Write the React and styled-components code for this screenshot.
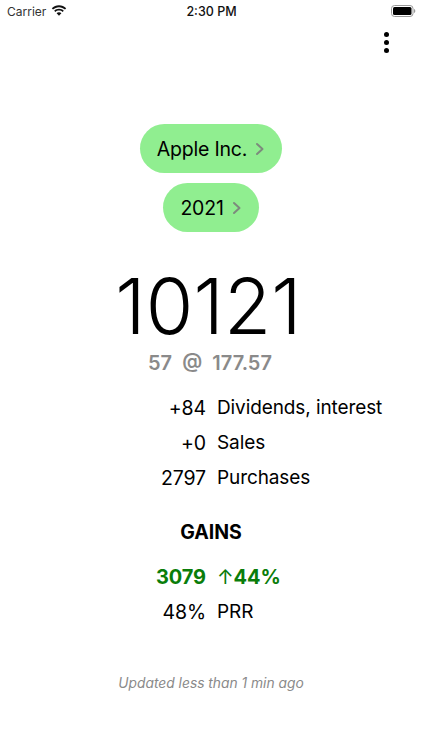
import React from "react";
import styled, { createGlobalStyle } from "styled-components";

const GlobalStyle = createGlobalStyle`
  html, body {
    margin: 0;
    padding: 0;
    background: #fff;
    font-family: Inter, "Liberation Sans", sans-serif;
    color: #000;
  }
`;

const Screen = styled.div`
  width: 422px;
  height: 750px;
  overflow: hidden;
  display: flex;
  flex-direction: column;
  align-items: center;
`;

const StatusBar = styled.div`
  align-self: stretch;
  height: 22px;
  padding: 0 6px 0 7px;
  display: grid;
  grid-template-columns: 1fr auto 1fr;
  align-items: center;
  font-size: 12.5px;
  font-weight: 500;
  color: #111;
`;

const Carrier = styled.div`
  display: flex;
  align-items: center;
  gap: 5px;
  font-size: 12px;
  font-weight: 400;
  color: #333;
`;

const Battery = styled.div`
  justify-self: end;
  display: flex;
  align-items: center;
`;

const MenuRow = styled.div`
  align-self: stretch;
  height: 22px;
  margin-top: 10px;
  padding-right: 33px;
  display: flex;
  justify-content: flex-end;
`;

const Dots = styled.div`
  display: flex;
  flex-direction: column;
  gap: 3px;
  span {
    width: 5px;
    height: 5px;
    border-radius: 50%;
    background: #000;
  }
`;

const Pill = styled.button`
  height: 49px;
  margin-top: ${(p) => p.$top}px;
  padding: 0 17px;
  border: 0;
  border-radius: 25px;
  background: #90ee90;
  color: #000;
  font-family: inherit;
  font-size: 19.5px;
  letter-spacing: -0.2px;
  display: flex;
  align-items: center;
  gap: 8px;
`;

const Total = styled.div`
  margin-top: 34px;
  margin-right: 5px;
  height: 80px;
  line-height: 80px;
  font-size: 77px;
  font-weight: 300;
  letter-spacing: 0.2px;
`;

const Price = styled.div`
  margin-top: 5px;
  margin-right: 2px;
  height: 24px;
  line-height: 24px;
  font-size: 20px;
  font-weight: 600;
  color: #8a8a8a;
  white-space: pre;
`;

const Rows = styled.div`
  margin-top: ${(p) => p.$top}px;
  align-self: stretch;
  display: grid;
  grid-template-columns: 206px 1fr;
  column-gap: 11px;
  grid-auto-rows: 35px;
  align-items: center;
  letter-spacing: -0.1px;
`;

const Amount = styled.div`
  text-align: right;
  font-size: ${(p) => (p.$gain ? 20 : 19.5)}px;
  color: ${(p) => (p.$gain ? "#0a7d0a" : "#000")};
  font-weight: ${(p) => (p.$gain ? 700 : 400)};
`;

const Label = styled.div`
  font-size: ${(p) => (p.$gain ? 20 : 19)}px;
  color: ${(p) => (p.$gain ? "#0a7d0a" : "#000")};
  font-weight: ${(p) => (p.$gain ? 700 : 400)};
`;

const Arrow = styled.span`
  font-weight: 400;
`;

const Heading = styled.div`
  margin-top: 25px;
  height: 24px;
  line-height: 24px;
  font-size: 19.5px;
  font-weight: 700;
`;

const Updated = styled.div`
  margin-top: 46px;
  font-size: 13.8px;
  font-style: italic;
  color: #8a8a8a;
`;

const Chevron = () => (
  <svg width="10" height="14" viewBox="0 0 10 14" fill="none">
    <path d="M2 2l5.500 5L2 12" stroke="#7d8a7d" strokeWidth="2" strokeLinecap="round" strokeLinejoin="round" />
  </svg>
);

const Wifi = () => (
  <svg width="16" height="12" viewBox="0 0 16 12" fill="#111">
    <path d="M8 2.200c2.300 0 4.400.9 6 2.400l1.200-1.300C13.300 1.400 10.800.3 8 .3S2.700 1.400.8 3.300L2 4.600c1.600-1.500 3.700-2.400 6-2.400z" />
    <path d="M8 5.600c1.400 0 2.600.5 3.600 1.400l1.200-1.300C11.500 4.500 9.800 3.800 8 3.800s-3.500.7-4.800 1.900L4.400 7c1-.9 2.200-1.400 3.600-1.400z" />
    <path d="M8 7.300c-1 0-1.800.4-2.400.9L8 10.800l2.400-2.600c-.6-.5-1.400-.9-2.400-.9z" />
  </svg>
);

const BatteryIcon = () => (
  <svg width="25" height="12" viewBox="0 0 25 12" fill="none">
    <rect x="0.5" y="0.5" width="21.500" height="11" rx="3" stroke="#999" />
    <rect x="2" y="2" width="18.500" height="8" rx="1.500" fill="#000" />
    <path d="M23 4v4c.8-.3 1.300-1.100 1.300-2s-.5-1.700-1.300-2z" fill="#999" />
  </svg>
);

export default function App() {
  return (
    <>
      <GlobalStyle />
      <Screen>
        <StatusBar>
          <Carrier>
            Carrier <Wifi />
          </Carrier>
          <div>2:30 PM</div>
          <Battery>
            <BatteryIcon />
          </Battery>
        </StatusBar>
        <MenuRow>
          <Dots>
            <span />
            <span />
            <span />
          </Dots>
        </MenuRow>
        <Pill $top={70}>
          Apple Inc. <Chevron />
        </Pill>
        <Pill $top={10}>
          2021 <Chevron />
        </Pill>
        <Total>10121</Total>
        <Price>57  @  177.57</Price>
        <Rows $top={15}>
          <Amount>+84</Amount>
          <Label>Dividends, interest</Label>
          <Amount>+0</Amount>
          <Label>Sales</Label>
          <Amount>2797</Amount>
          <Label>Purchases</Label>
        </Rows>
        <Heading>GAINS</Heading>
        <Rows $top={15}>
          <Amount $gain>3079</Amount>
          <Label $gain><Arrow>↑</Arrow>44%</Label>
          <Amount>48%</Amount>
          <Label>PRR</Label>
        </Rows>
        <Updated>Updated less than 1 min ago</Updated>
      </Screen>
    </>
  );
}
